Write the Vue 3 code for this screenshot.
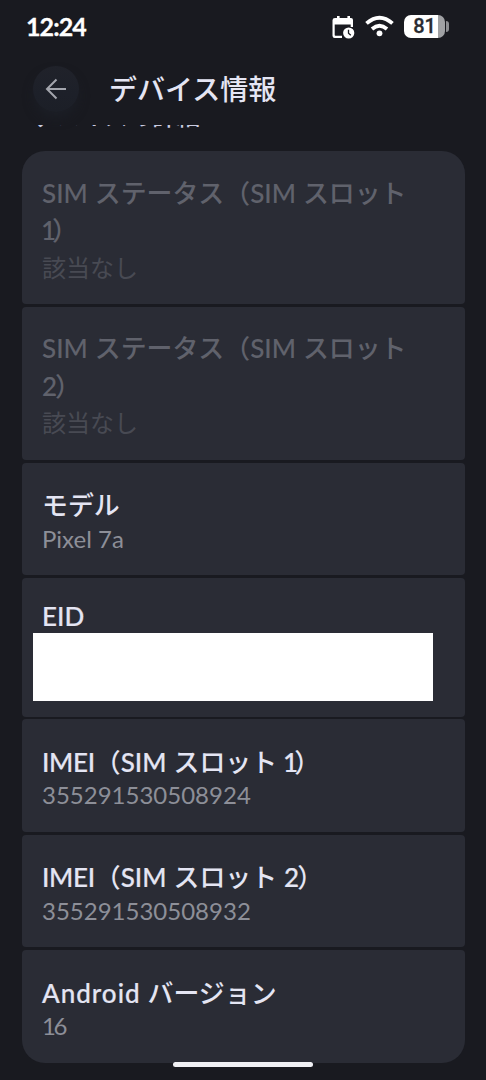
<script setup>
const simStatus = (n) => ({
  lines: [[['SIM', 'l'], ['ステータス（', 'j'], ['SIM', 'l tight'], ['スロット', 'j end']], [[n, 'l digit d' + n], ['）', 'j']]],
  sub: '該当なし', subClass: 'jp', disabled: true,
})
const imei = (n, sub) => ({
  lines: [[['IMEI', 'l tight imei'], ['（', 'j'], ['SIM', 'l'], ['スロット', 'j'], [n, 'l num digit d' + n], ['）', 'j']]],
  sub,
})
const items = [
  simStatus('1'),
  simStatus('2'),
  { lines: [[['モデル', 'j']]], sub: 'Pixel 7a' },
  { lines: [[['EID', 'l']]], masked: true },
  imei('1', '355291530508924'),
  imei('2', '355291530508932'),
  { lines: [[['Android', 'l wide'], ['バージョン', 'j']]], sub: '16', subClass: 'narrow' },
]
</script>

<template>
  <div class="screen">
    <div class="status">
      <span class="time">12:24</span>
      <div class="status-icons">
        <svg class="cal" width="23" height="24" viewBox="0 0 23 24">
          <path fill="#fff" fill-rule="evenodd" d="M3 2h2V0h2.600v2h7.800V0H18v2h1q2 0 2 2v7h-2.300V8.500H2.700v10.600q0 .7.700.7H10V22H2.700Q.5 22 .5 19.800V4.300Q.5 2 3 2Z" />
          <circle cx="16.700" cy="17" r="5.600" fill="#fff" />
          <path d="M16.500 13.700V17.300l2.300 2" fill="none" stroke="#191a20" stroke-width="1.300" />
        </svg>
        <svg class="wifi" width="29" height="22" viewBox="0 0 29 22">
          <g fill="none" stroke="#fff" stroke-width="3.800">
            <path d="M1.500 8.400Q14.500-3 27.500 8.400" />
            <path d="M7 14Q14.500 7.600 22 14" />
          </g>
          <circle cx="14.500" cy="18.300" r="2.900" fill="#fff" />
        </svg>
        <div class="battery"><div class="cell"><span>81</span></div><i /></div>
      </div>
    </div>
    <header>
      <div class="back">
        <svg width="22" height="22" viewBox="0 0 22 22"><path d="M21 11H2M11.500 1.500 2 11l9.500 9.500" fill="none" stroke="#a3a5ad" stroke-width="2" /></svg>
      </div>
      <h1>デバイス情報</h1>
    </header>
    <div class="section"><span>デバイスの詳細</span></div>
    <main>
      <section v-for="(item, i) in items" :key="i" class="card" :class="{ disabled: item.disabled, eid: item.masked }">
        <div v-for="(line, k) in item.lines" :key="k" class="title">
          <span v-for="(part, n) in line" :key="n" :class="part[1]">{{ part[0] }}</span>
        </div>
        <div v-if="item.sub" class="sub" :class="item.subClass">{{ item.sub }}</div>
        <div v-if="item.masked" class="mask" />
      </section>
    </main>
    <div class="handle" />
  </div>
</template>

<style>
html, body { margin: 0; background: #191a20; }
</style>

<style scoped>
.screen { position: relative; width: 486px; height: 1080px; overflow: hidden; background: #191a20; font-family: Lato, "Noto Sans CJK JP", sans-serif; color: #e4e5f3; }
.status { height: 52px; box-sizing: border-box; padding: 0 37px 0 26px; display: flex; align-items: center; justify-content: space-between; }
.time { font: 700 25px/52px Lato, sans-serif; letter-spacing: -0.900px; color: #fff; -webkit-text-stroke: 0.300px #fff; }
.status-icons { display: flex; align-items: center; }
.cal { margin-top: 3px; }
.wifi { margin: 0 10px; }
.battery { display: flex; align-items: center; }
.cell { width: 41px; height: 23px; border-radius: 7px; background: linear-gradient(90deg, #fff 0 34px, #a0a1a4 34px); display: flex; align-items: center; justify-content: center; }
.cell span { font: 500 20px/23px Roboto, sans-serif; color: #292b31; -webkit-text-stroke: 0.300px #292b31; }
.battery i { width: 3px; height: 11px; margin-left: 1px; border-radius: 0 3px 3px 0; background: #8c8d91; }
header { height: 73px; display: flex; align-items: center; }
.back { width: 46px; height: 46px; margin: 0 0 0 33px; border-radius: 50%; display: flex; align-items: center; justify-content: center; background: linear-gradient(#20222a, #1d2029 60%, #1c1f27); box-shadow: 0 7px 12px -2px #1c1f27; }
h1 { margin: -2px 0 0 30px; font: 500 28px/40px "Noto Sans CJK JP", sans-serif; }
.section { height: 6px; overflow: hidden; padding-left: 33px; }
.section span { display: block; margin-top: -25px; font: 500 24px/30px "Noto Sans CJK JP", sans-serif; color: #c9cbe0; }
main { margin: 20.400px 21px 0 22px; display: flex; flex-direction: column; gap: 2.600px; }
.card { position: relative; height: 112.800px; box-sizing: border-box; padding: 22.600px 20px 0; border-radius: 4px; background: #2a2c35; }
.card.disabled { height: 153px; padding-top: 21.500px; }
.card:first-child { border-radius: 23px 23px 4px 4px; }
.card:last-child { border-radius: 4px 4px 23px 23px; }
.card.eid { height: 138.600px; padding-top: 20px; }
.title { height: 37.500px; display: flex; align-items: baseline; white-space: nowrap; }
.j { font: 500 25.900px/37.500px "Noto Sans CJK JP", sans-serif; }
.l { font: 500 26px/37.500px Lato, sans-serif; -webkit-text-stroke: 0.200px currentColor; }
.disabled .l { -webkit-text-stroke-width: 0.100px; }
.l + .j { margin-left: 7px; }
.l.tight + .j { margin-left: 0; }
.l.tight + .j.end { margin-left: 7px; }
.imei { letter-spacing: -0.300px; }
.wide { letter-spacing: 1px; }
.l.num { margin-left: 7px; }
.l.d1 + .j { margin-left: -4px; }
.l.d2 + .j { margin-left: -2px; }
.l.d1 { margin-left: -1px; }
.l.num.d1 { margin-left: 6px; }
.sub { height: 32px; font: 400 24px/32px Lato, sans-serif; color: #8d8f98; }
.sub.jp { font: 400 24px/37px "Noto Sans CJK JP", sans-serif; }
.sub.narrow { letter-spacing: -2.500px; }
.disabled .title { color: #60626c; }
.disabled .sub { color: #484a53; }
.mask { position: absolute; left: 11px; top: 54.700px; width: 400px; height: 68px; background: #fff; }
.handle { position: absolute; left: 173px; top: 1062px; width: 140px; height: 5px; border-radius: 3px; background: #f0f0f4; }
</style>
